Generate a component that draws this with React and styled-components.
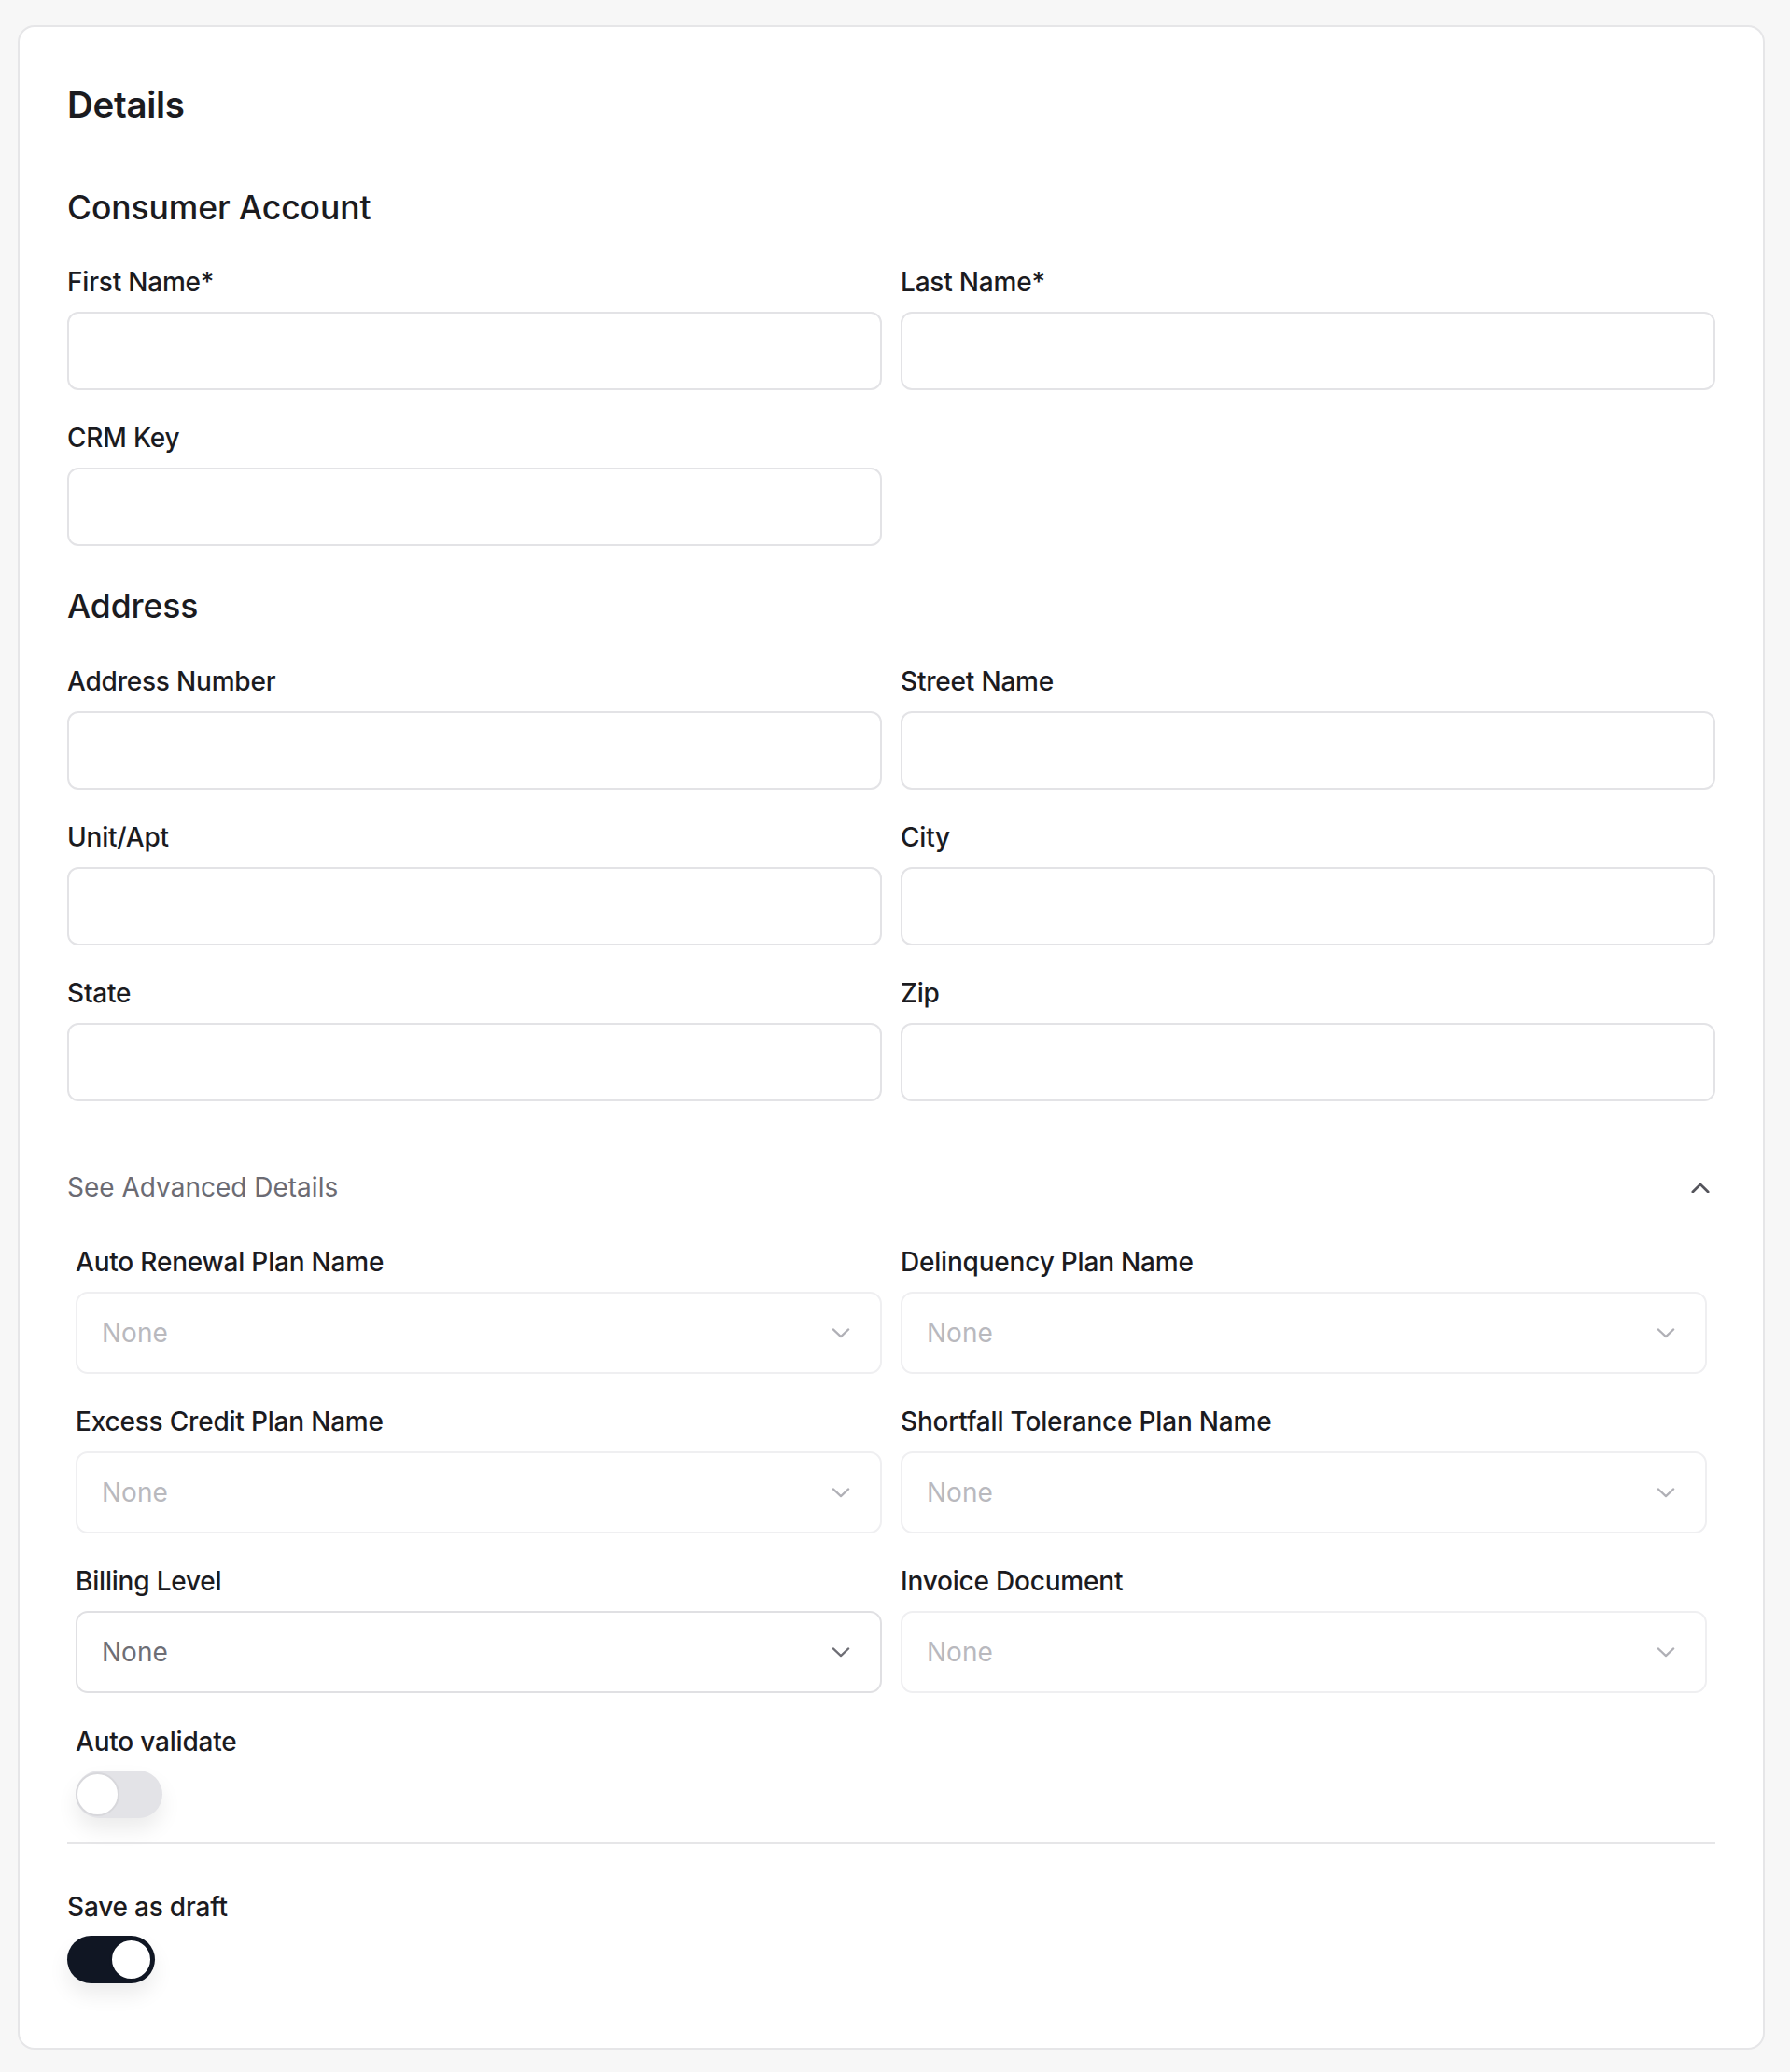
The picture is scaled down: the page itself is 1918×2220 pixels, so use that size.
import React from 'react'
import styled, { createGlobalStyle } from 'styled-components'

const GlobalStyle = createGlobalStyle`
  html, body {
    margin: 0;
    padding: 0;
    background: #f7f7f7;
  }
  body {
    font-family: Inter, "Liberation Sans", Arial, sans-serif;
    color: #1b1b1f;
  }
`

const Page = styled.div`
  padding: 27px 27px 24px 19px;
`

const Card = styled.div`
  background: #ffffff;
  border: 2px solid #e6e6e8;
  border-radius: 18px;
  padding: 59px 51px 69px 51px;
`

const Title = styled.h1`
  margin: 0;
  font-size: 38.5px;
  line-height: 48px;
  font-weight: 600;
  letter-spacing: -0.3px;
`

const SectionTitle = styled.h2`
  margin: ${p => p.$top}px 0 0;
  font-size: 35.5px;
  line-height: 42px;
  font-weight: 500;
  letter-spacing: -0.1px;
`

const Grid = styled.div`
  display: grid;
  grid-template-columns: 1fr 1fr;
  column-gap: 20px;
  row-gap: ${p => p.$gap || 34}px;
  margin-top: ${p => p.$top || 0}px;
  padding: 0 ${p => p.$inset || 0}px;
`

const Field = styled.div`
  display: flex;
  flex-direction: column;
  gap: 15px;
`

const Label = styled.label`
  font-size: 28px;
  line-height: 34px;
  font-weight: 500;
  color: #1b1b1f;
  letter-spacing: -0.2px;
`

const Input = styled.div`
  box-sizing: border-box;
  height: 84px;
  border: 2px solid #e3e3e6;
  border-radius: 12px;
  background: #fff;
`

const Select = styled.div`
  box-sizing: border-box;
  height: 88px;
  border: 2px solid ${p => (p.$disabled ? '#efeff1' : '#e0e0e3')};
  border-radius: 13px;
  display: flex;
  align-items: center;
  justify-content: space-between;
  padding: 0 32px 0 26px;
  font-size: 28px;
  color: ${p => (p.$disabled ? '#b9b9be' : '#6e6e75')};
  svg {
    color: ${p => (p.$disabled ? '#b0b0b6' : '#6e6e75')};
  }
`

const Toggler = styled.button`
  margin-top: 75px;
  width: 100%;
  display: flex;
  align-items: center;
  justify-content: space-between;
  background: none;
  border: 0;
  padding: 0 6px 0 0;
  font-family: inherit;
  font-size: 28px;
  line-height: 34px;
  color: #6b6b73;
  cursor: pointer;
`

const Advanced = styled.div`
  margin-top: 46px;
`

const SwitchField = styled.div`
  display: flex;
  flex-direction: column;
  align-items: flex-start;
  gap: 14px;
  margin-top: ${p => p.$top || 0}px;
  padding-left: ${p => p.$inset || 0}px;
`

const Track = styled.div`
  position: relative;
  width: ${p => (p.$on ? 94 : 93)}px;
  height: 51px;
  border-radius: 26px;
  background: ${p => (p.$on ? '#101623' : '#e3e3e7')};
  box-shadow: 0 12px 22px rgba(0, 0, 0, 0.08);
`

const Knob = styled.div`
  position: absolute;
  top: 2px;
  ${p => (p.$on ? 'right: 2px;' : 'left: 0px;')}
  box-sizing: border-box;
  width: 47px;
  height: 47px;
  border-radius: 50%;
  background: #fff;
  border: ${p => (p.$on ? '3px solid #101623' : '2px solid #d8d8dc')};
`

const Divider = styled.hr`
  margin: 26px 0 50px;
  border: 0;
  height: 2px;
  background: #e6e6e8;
`

const UpIcon = styled.span`
  display: flex;
  color: #55555c;
`

const Chevron = ({ up, size = 20 }) => (
  <svg width={size} height={size * 0.55} viewBox="0 0 22 12" fill="none">
    <path
      d={up ? 'M2 11 L11 2 L20 11' : 'M2 1.5 L11 10 L20 1.5'}
      stroke="currentColor"
      strokeWidth={up ? 3 : 2.4}
      strokeLinecap="round"
      strokeLinejoin="round"
    />
  </svg>
)

const TextField = ({ label }) => (
  <Field>
    <Label>{label}</Label>
    <Input />
  </Field>
)

const SelectField = ({ label, disabled }) => (
  <Field>
    <Label>{label}</Label>
    <Select $disabled={disabled}>
      None
      <Chevron />
    </Select>
  </Field>
)

export default function App() {
  return (
    <Page>
      <GlobalStyle />
      <Card>
        <Title>Details</Title>

        <SectionTitle $top={66}>Consumer Account</SectionTitle>
        <Grid $top={41}>
          <TextField label="First Name*" />
          <TextField label="Last Name*" />
          <TextField label="CRM Key" />
        </Grid>

        <SectionTitle $top={44}>Address</SectionTitle>
        <Grid $top={42}>
          <TextField label="Address Number" />
          <TextField label="Street Name" />
          <TextField label="Unit/Apt" />
          <TextField label="City" />
          <TextField label="State" />
          <TextField label="Zip" />
        </Grid>

        <Toggler type="button">
          <span>See Advanced Details</span>
          <UpIcon>
            <Chevron up size={20} />
          </UpIcon>
        </Toggler>

        <Advanced>
          <Grid $inset={9} $gap={34}>
            <SelectField label="Auto Renewal Plan Name" disabled />
            <SelectField label="Delinquency Plan Name" disabled />
            <SelectField label="Excess Credit Plan Name" disabled />
            <SelectField label="Shortfall Tolerance Plan Name" disabled />
            <SelectField label="Billing Level" />
            <SelectField label="Invoice Document" disabled />
          </Grid>
          <SwitchField $top={35} $inset={9}>
            <Label>Auto validate</Label>
            <Track>
              <Knob />
            </Track>
          </SwitchField>
        </Advanced>

        <Divider />

        <SwitchField>
          <Label>Save as draft</Label>
          <Track $on>
            <Knob $on />
          </Track>
        </SwitchField>
      </Card>
    </Page>
  )
}
